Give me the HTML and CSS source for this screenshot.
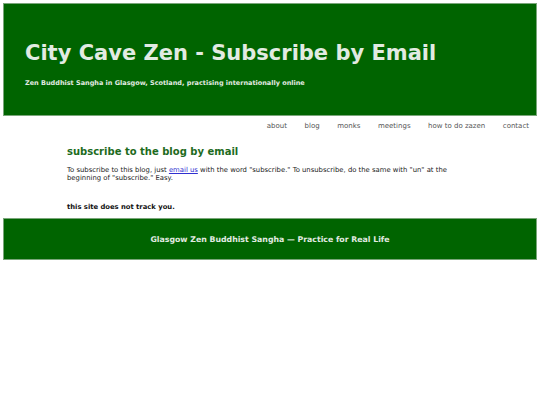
FILE: index.html
```html
<!DOCTYPE html>
<html lang="en">
<head>
<meta charset="utf-8">
<title>City Cave Zen - Subscribe by Email</title>
<link rel="stylesheet" href="styles.css">
</head>
<body>
<header class="site-header">
  <h1 class="site-title">City Cave Zen - Subscribe by Email</h1>
  <p class="site-tagline">Zen Buddhist Sangha in Glasgow, Scotland, practising internationally online</p>
</header>
<nav class="site-nav">
  <a href="#">about</a>
  <a href="#">blog</a>
  <a href="#">monks</a>
  <a href="#">meetings</a>
  <a href="#">how to do zazen</a>
  <a href="#">contact</a>
</nav>
<main class="content">
  <h2 class="content-title">subscribe to the blog by email</h2>
  <p class="content-text">To subscribe to this blog, just <a href="#">email us</a> with the word "subscribe." To unsubscribe, do the same with "un" at the beginning of "subscribe." Easy.</p>
  <p class="notice">this site does not track you.</p>
</main>
<footer class="site-footer">
  <p>Glasgow Zen Buddhist Sangha — Practice for Real Life</p>
</footer>
</body>
</html>
```

FILE: styles.css
```css
html, body {
  margin: 0;
  padding: 0;
  background: #fff;
}
body {
  padding: 3px;
  font-family: "DejaVu Sans", Verdana, sans-serif;
  color: #222;
}
.site-header {
  background: #006400;
  border: 1px solid #7aa67a;
  height: 113px;
  box-sizing: border-box;
  padding: 36px 0 0 21px;
}
.site-title {
  margin: 0;
  font-size: 21px;
  font-weight: bold;
  color: #e2ebe2;
  line-height: 26px;
}
.site-tagline {
  margin: 13px 0 0;
  font-size: 6.5px;
  font-weight: bold;
  color: #e2ebe2;
}
.site-nav {
  display: flex;
  justify-content: flex-end;
  gap: 17.5px;
  padding: 6px 8px 0 0;
  height: 20px;
  font-size: 7px;
}
.site-nav a {
  color: #555;
  text-decoration: none;
}
.content {
  width: 400px;
  margin: 0 0 0 64px;
  padding: 3px 0 0;
}
.content-title {
  margin: 0;
  font-size: 10px;
  font-weight: bold;
  color: #1d6b1d;
  line-height: 13px;
}
.content-text {
  margin: 8px 0 0;
  font-size: 6.85px;
  line-height: 8px;
  color: #222;
}
.content-text a {
  color: #3030d0;
}
.notice {
  margin: 21px 0 0;
  padding-bottom: 7px;
  font-size: 6.8px;
  font-weight: bold;
  color: #111;
}
.site-footer {
  background: #006400;
  border: 1px solid #7aa67a;
  height: 42px;
  box-sizing: border-box;
  display: flex;
  align-items: center;
  justify-content: center;
}
.site-footer p {
  margin: 0;
  font-size: 7.8px;
  font-weight: bold;
  color: #e2ebe2;
}
```
